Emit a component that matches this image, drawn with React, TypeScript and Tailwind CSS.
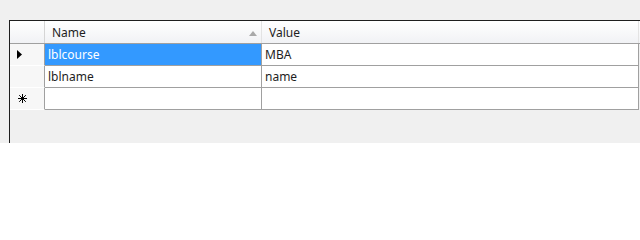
export default function App() {
  const font = { fontFamily: '"Segoe UI", "Noto Sans", "Open Sans", sans-serif' }
  return (
    <div className="w-[640px] h-[240px] bg-white overflow-hidden" style={font}>
      <div className="h-[143px] bg-[#f0f0f0] pt-[20px] pl-[9px]">
        <div className="h-[123px] border-t border-l border-[#1e1e1e] bg-[#f0f0f0] flex flex-col">
          {/* Header row */}
          <div className="flex h-[23px] border-b border-[#a0a0a0] bg-gradient-to-b from-white to-[#f1f2f5] text-[12px] text-[#1e1e1e]">
            <div className="w-[35px] shrink-0 border-r border-[#d5d5d5]" />
            <div className="w-[217px] shrink-0 border-r border-[#e3e3e3] relative flex items-center pl-[7px] pt-[2px]">
              Name
              <svg className="absolute right-[4px] top-[10px]" width="8" height="5" viewBox="0 0 8 5">
                <path d="M4 0 L8 5 L0 5 Z" fill="#a9a9a9" />
              </svg>
            </div>
            <div className="w-[377px] shrink-0 border-r border-[#e3e3e3] flex items-center pl-[7px] pt-[2px]">
              Value
            </div>
          </div>
          {/* Rows */}
          {[
            { name: "lblcourse", value: "MBA", selected: true, marker: "current" },
            { name: "lblname", value: "name", selected: false, marker: "" },
            { name: "", value: "", selected: false, marker: "new" },
          ].map((row, i) => (
            <div key={i} className="flex h-[22px] text-[12px] text-[#1e1e1e]">
              <div className="w-[35px] shrink-0 border-r border-[#a0a0a0] bg-[#f7f7f7] border-b border-b-[#ffffff] flex items-center pl-[7px]">
                {row.marker === "current" && (
                  <svg width="5" height="9" viewBox="0 0 5 9">
                    <path d="M0 0 L5 4.5 L0 9 Z" fill="#000" />
                  </svg>
                )}
                {row.marker === "new" && (
                  <svg width="9" height="9" viewBox="0 0 9 9" className="ml-[1px]">
                    <path d="M4.5 0 V9 M0 4.5 H9 M1.2 1.2 L7.8 7.8 M7.8 1.2 L1.2 7.8" stroke="#000" strokeWidth="1" />
                  </svg>
                )}
              </div>
              <div
                className={
                  row.selected
                    ? "w-[217px] shrink-0 border-r border-b border-[#a0a0a0] bg-[#3399ff] text-white flex items-center pl-[3px] pt-[1px]"
                    : "w-[217px] shrink-0 border-r border-b border-[#a0a0a0] bg-white flex items-center pl-[3px] pt-[1px]"
                }
              >
                {row.name}
              </div>
              <div className="w-[377px] shrink-0 border-r border-b border-[#a0a0a0] bg-white flex items-center pl-[3px] pt-[1px]">
                {row.value}
              </div>
            </div>
          ))}
        </div>
      </div>
    </div>
  )
}
